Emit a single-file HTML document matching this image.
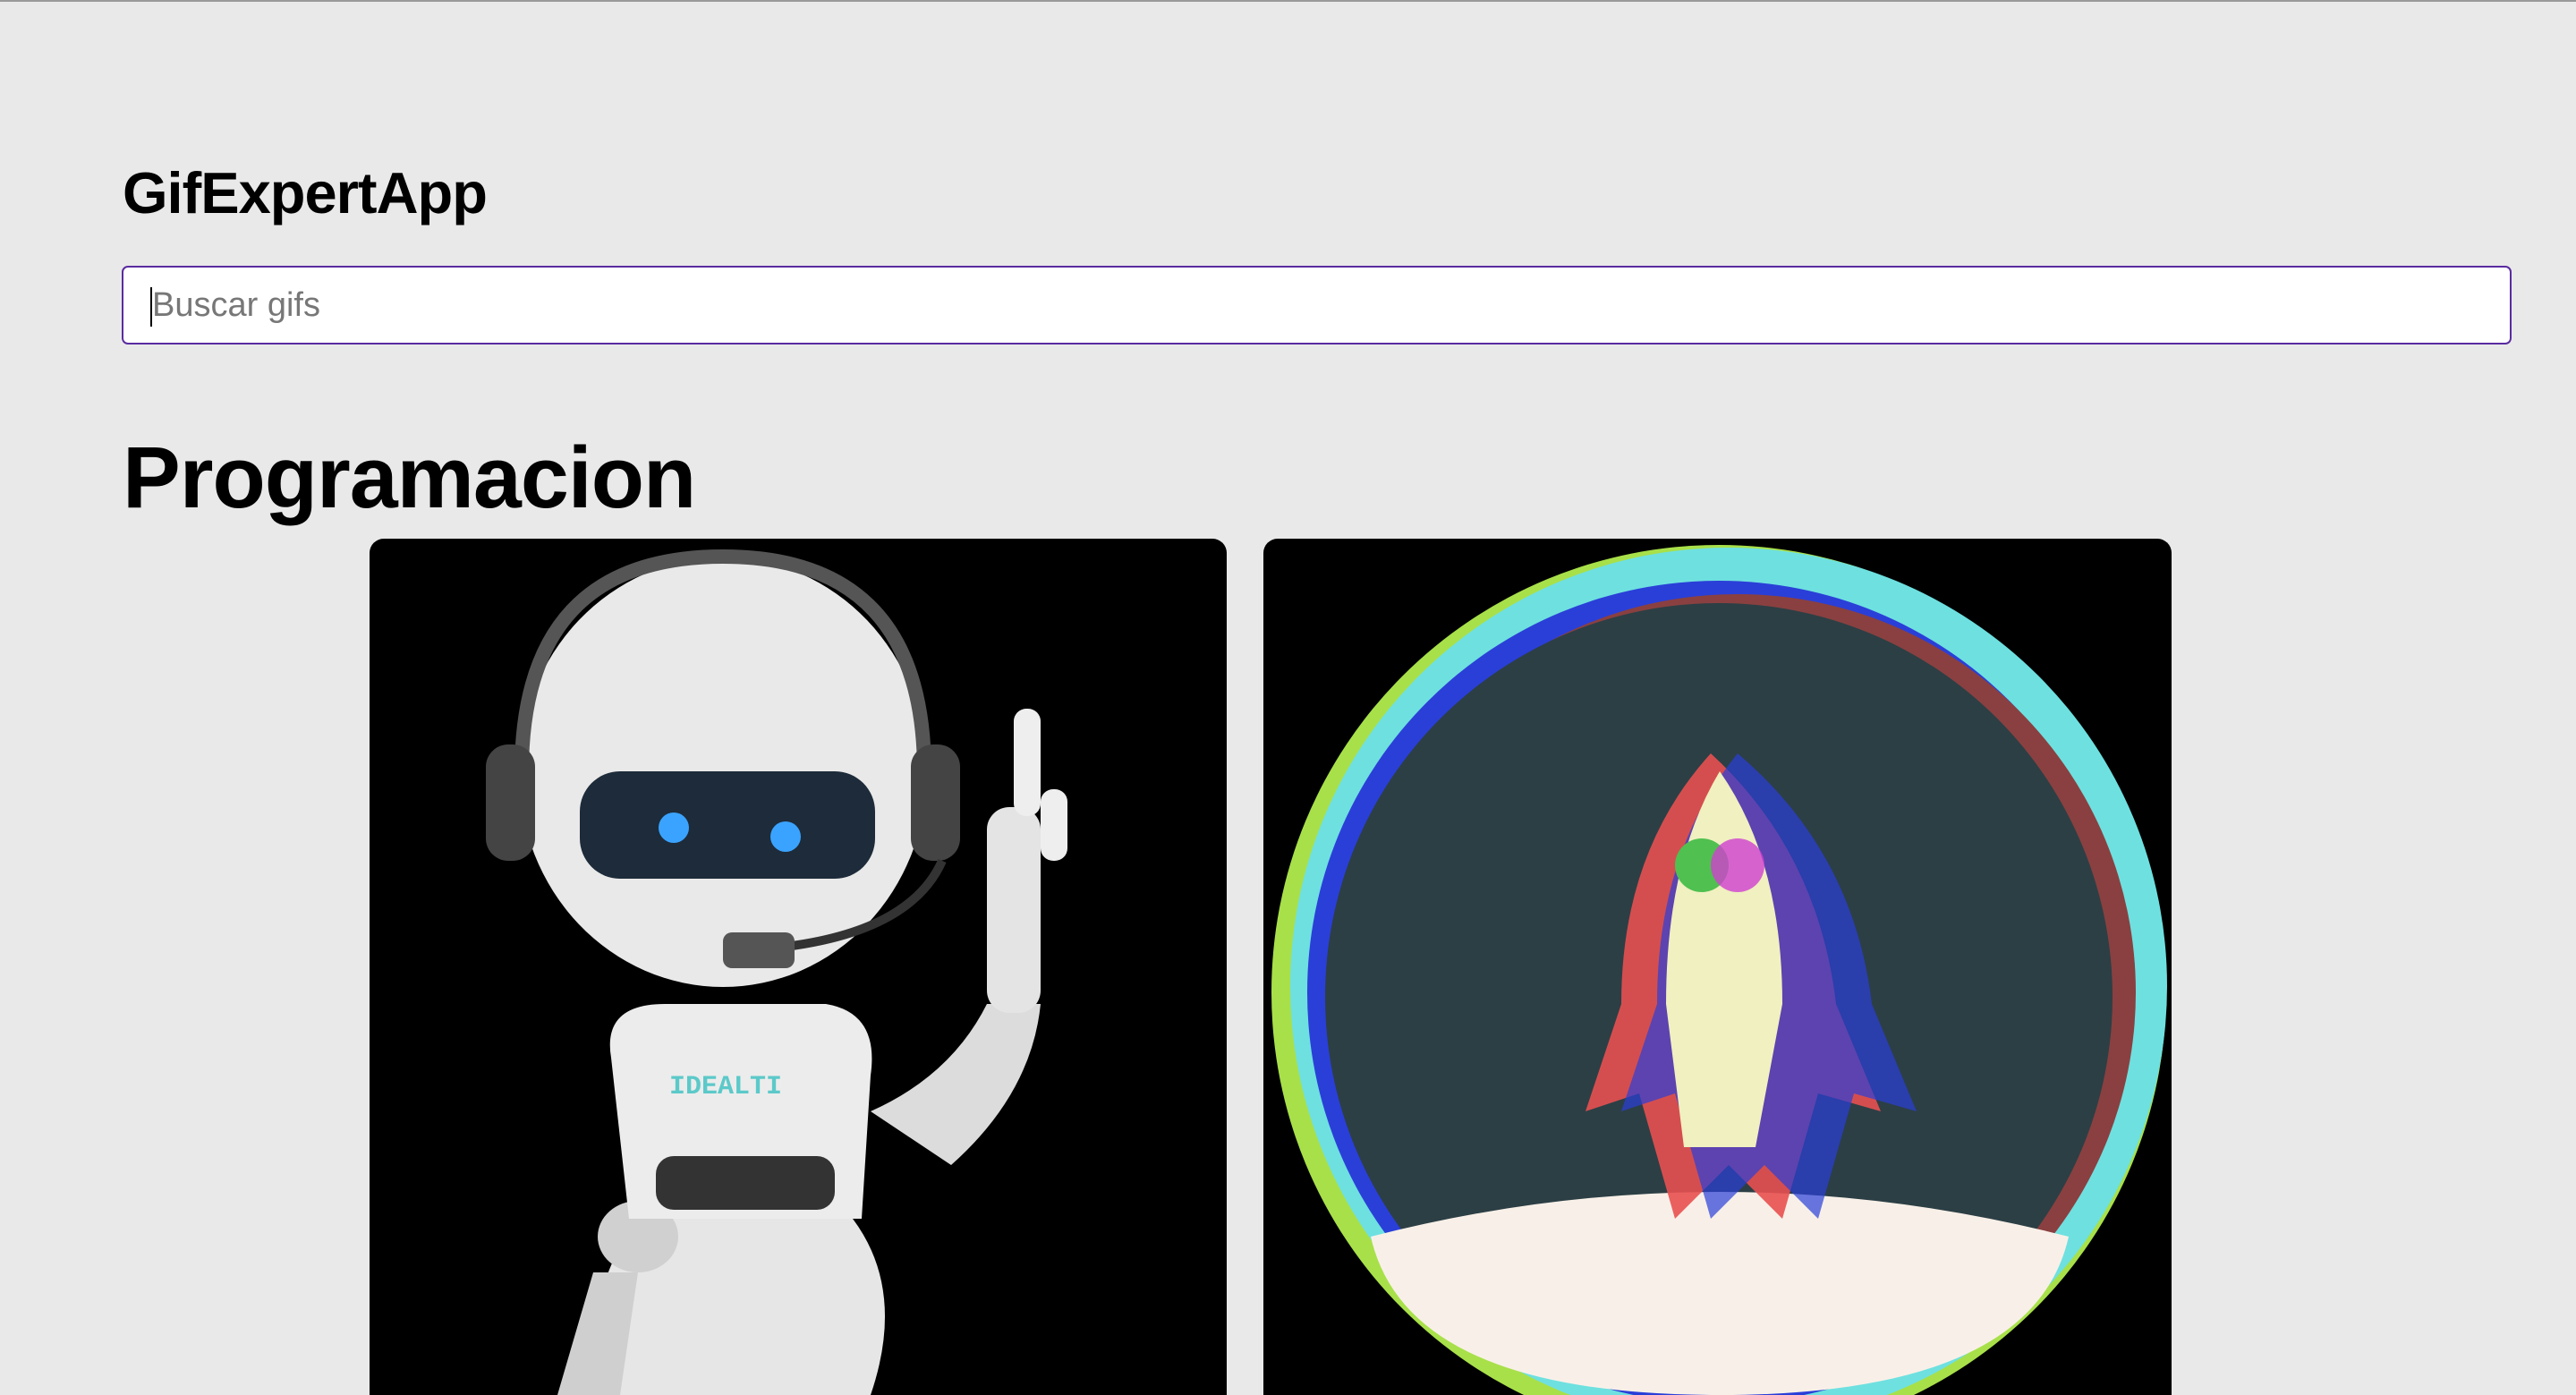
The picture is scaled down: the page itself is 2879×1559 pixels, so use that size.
<!DOCTYPE html>
<html><head><meta charset="utf-8"><style>
html,body{margin:0;padding:0;width:2879px;height:1559px;overflow:hidden;background:#e9e9e9;font-family:"Liberation Sans",Arial,sans-serif}
.top{position:absolute;left:0;top:0;width:100%;height:2px;background:#9a9a9a}
h2{position:absolute;left:137px;top:172px;margin:0;font-size:65px;font-weight:bold;line-height:88px;color:#000;letter-spacing:-1px}
.inp{position:absolute;left:136px;top:297px;width:2667px;height:84px;border:2px solid #5a2ca0;border-radius:7px;background:#fff}
.inp span{position:absolute;left:32px;top:20px;font-size:38px;color:#777;line-height:44px}
.inp i{position:absolute;left:30px;top:22px;width:2px;height:44px;background:#000}
h3{position:absolute;left:137px;top:470px;margin:0;font-size:97px;font-weight:bold;line-height:128px;color:#000;letter-spacing:-1px}
.card{position:absolute;top:602px;height:957px;background:#000;border-radius:16px 16px 0 0;overflow:hidden}
svg{display:block}
</style></head><body>
<div class="top"></div>
<h2>GifExpertApp</h2>
<div class="inp"><i></i><span>Buscar gifs</span></div>
<h3>Programacion</h3>
<div class="card" style="left:413px;width:958px">
<svg width="958" height="957" viewBox="0 0 958 957">
<path d="M250 957 Q240 840 300 760 L540 760 Q600 840 560 957 Z" fill="#e6e6e6"/>
<ellipse cx="300" cy="780" rx="45" ry="40" fill="#d0d0d0"/>
<path d="M250 820 L210 957 L280 957 L300 820Z" fill="#cfcfcf"/>
<path d="M270 580 Q260 520 330 520 L510 520 Q570 530 560 600 L550 760 L290 760 Z" fill="#ececec"/>
<rect x="320" y="690" width="200" height="60" rx="20" fill="#333"/>
<text x="335" y="620" font-family="Liberation Mono,monospace" font-size="30" font-weight="bold" fill="#5cc9c9">IDEALTI</text>
<path d="M560 640 Q650 600 690 520 L750 520 Q740 620 650 700 Z" fill="#dcdcdc"/>
<rect x="690" y="300" width="60" height="230" rx="25" fill="#e4e4e4"/>
<rect x="750" y="280" width="30" height="80" rx="14" fill="#eee"/>
<rect x="720" y="190" width="30" height="120" rx="14" fill="#eee"/>
<ellipse cx="395" cy="261" rx="228" ry="240" fill="#e9e9e9"/>
<path d="M170 261 Q170 20 395 20 Q620 20 620 261" fill="none" stroke="#555" stroke-width="16"/>
<rect x="130" y="230" width="55" height="130" rx="25" fill="#444"/>
<rect x="605" y="230" width="55" height="130" rx="25" fill="#444"/>
<rect x="235" y="260" width="330" height="120" rx="45" fill="#1d2b3a"/>
<circle cx="340" cy="323" r="17" fill="#3aa3ff"/>
<circle cx="465" cy="333" r="17" fill="#3aa3ff"/>
<path d="M640 360 Q600 450 420 460" fill="none" stroke="#333" stroke-width="10"/>
<rect x="395" y="440" width="80" height="40" rx="10" fill="#555"/>
</svg></div>
<div class="card" style="left:1412px;width:1015px">
<svg width="1015" height="957" viewBox="0 0 1015 957">
<circle cx="509" cy="507" r="500" fill="#a8e04a"/>
<circle cx="520" cy="500" r="490" fill="#6ee0e0"/>
<circle cx="509" cy="507" r="460" fill="#2a3fd8"/>
<circle cx="530" cy="507" r="445" fill="#8a4040"/>
<circle cx="509" cy="512" r="440" fill="#2c3f45"/>
<path d="M120 780 Q509 680 900 780 Q860 957 509 957 Q160 957 120 780Z" fill="#f8f0e8"/>
<path d="M500 240 Q400 350 400 520 L360 640 L420 620 L460 760 L520 700 L580 760 L620 620 L690 640 L640 520 Q620 350 500 240Z" fill="#e85050" opacity=".9"/>
<path d="M530 240 Q440 350 440 520 L400 640 L460 620 L500 760 L560 700 L620 760 L660 620 L730 640 L680 520 Q660 350 530 240Z" fill="#2a3fd8" opacity=".7"/>
<path d="M510 260 Q450 360 450 520 L470 680 L550 680 L580 520 Q580 360 510 260Z" fill="#f0f0c0"/>
<circle cx="490" cy="365" r="30" fill="#50c050"/><circle cx="530" cy="365" r="30" fill="#d040d0" opacity=".8"/>
</svg></div>
</body></html>
